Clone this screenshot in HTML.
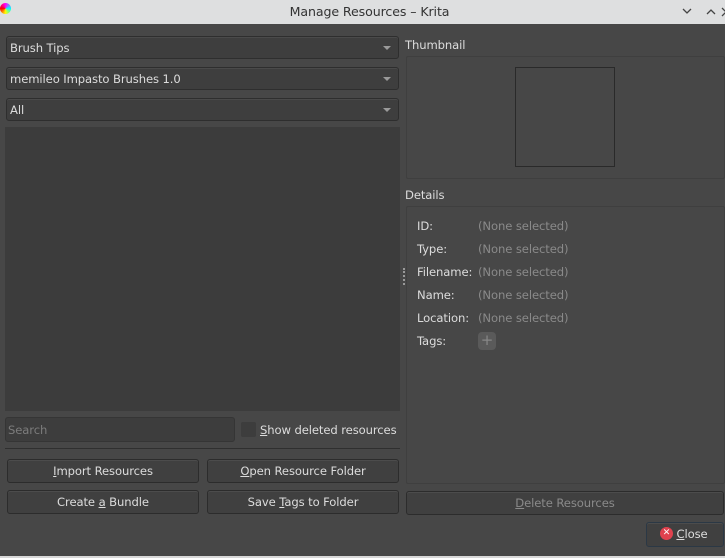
<!DOCTYPE html>
<html><head><style>
*{box-sizing:border-box;margin:0;padding:0}
body{width:725px;height:558px;background:#474747;font-family:"DejaVu Sans","Liberation Sans",sans-serif;font-size:11.6px;letter-spacing:-0.1px;color:#dcdcdc;position:relative;overflow:hidden}
.a{position:absolute}
.title{left:0;top:0;width:725px;height:24px;background:#dedfe0;color:#333;font-size:12.6px;text-align:center;line-height:24px;padding-left:14px}
.combo{background:#3e3e3e;border:1px solid #2e2e2e;border-radius:3px;height:23px;line-height:22px;padding-left:3px;box-shadow:inset 0 1px 0 #4a4a4a}
.combo:after{content:"";position:absolute;right:7px;top:9px;border-left:4px solid transparent;border-right:4px solid transparent;border-top:4px solid #9a9a9a}
.btn{background:#404040;border:1px solid #2c2c2c;border-radius:3px;height:24px;line-height:22px;text-align:center;box-shadow:inset 0 1px 0 #4c4c4c}
.box{border:1px solid #3f3f3f;border-radius:2px}
.lbl{left:417px;color:#dcdcdc}
.val{left:478px;color:#8a8a8a}
u{text-decoration:underline}
</style></head><body>
<div class="a title">Manage Resources – Krita</div>
<div class="a" style="left:0;top:3px;width:11px;height:11px;border-radius:50%;background:conic-gradient(#f0f,#0ff,#ff0,#f00,#f0f)"></div>
<svg class="a" style="left:680px;top:6px" width="45" height="12"><path d="M3 3l4 4 4-4M27 8l4-4 4 4M42 2l4 4-4 4" stroke="#444" stroke-width="1.3" fill="none"/></svg>

<div class="a combo" style="left:6px;top:36px;width:393px">Brush Tips</div>
<div class="a combo" style="left:6px;top:67px;width:393px">memileo Impasto Brushes 1.0</div>
<div class="a combo" style="left:6px;top:98px;width:393px">All</div>
<div class="a" style="left:5px;top:127px;width:395px;height:284px;background:#3c3c3c"></div>
<div class="a" style="left:5px;top:417px;width:230px;height:25px;background:#3d3d3d;border:1px solid #353535;border-radius:3px;padding-left:2px;line-height:24px;color:#7c7c7c">Search</div>
<div class="a" style="left:241px;top:422px;width:15px;height:15px;background:#3d3d3d;border-radius:2px"></div>
<div class="a" style="left:260px;top:423px"><u>S</u>how deleted resources</div>
<div class="a" style="left:5px;top:448px;width:395px;height:1px;background:#2f2f2f"></div>
<div class="a btn" style="left:7px;top:459px;width:192px"><u>I</u>mport Resources</div>
<div class="a btn" style="left:207px;top:459px;width:192px"><u>O</u>pen Resource Folder</div>
<div class="a btn" style="left:7px;top:490px;width:192px">Create <u>a</u> Bundle</div>
<div class="a btn" style="left:207px;top:490px;width:192px">Save <u>T</u>ags to Folder</div>

<div class="a" style="left:405px;top:38px">Thumbnail</div>
<div class="a box" style="left:406px;top:56px;width:319px;height:123px"></div>
<div class="a" style="left:515px;top:67px;width:100px;height:100px;border:1px solid #2a2a2a"></div>
<div class="a" style="left:405px;top:188px">Details</div>
<div class="a box" style="left:406px;top:206px;width:319px;height:278px"></div>
<div class="a" style="left:403px;top:268px;width:2px;height:17px;border-left:2px dotted #999"></div>
<div class="a lbl" style="top:219px">ID:</div><div class="a val" style="top:219px">(None selected)</div>
<div class="a lbl" style="top:242px">Type:</div><div class="a val" style="top:242px">(None selected)</div>
<div class="a lbl" style="top:265px">Filename:</div><div class="a val" style="top:265px">(None selected)</div>
<div class="a lbl" style="top:288px">Name:</div><div class="a val" style="top:288px">(None selected)</div>
<div class="a lbl" style="top:311px">Location:</div><div class="a val" style="top:311px">(None selected)</div>
<div class="a lbl" style="top:334px">Tags:</div>
<div class="a" style="left:478px;top:332px;width:18px;height:18px;border-radius:4px;background:#5a5a5a;color:#888;text-align:center;line-height:17px;font-size:15px">+</div>
<div class="a btn" style="left:406px;top:491px;width:318px;color:#8a8a8a"><u>D</u>elete Resources</div>
<div class="a btn" style="left:646px;top:522px;width:78px;height:25px;border-color:#2b3845;line-height:23px;padding-left:14px"><u>C</u>lose</div>
<div class="a" style="left:660px;top:527px;width:13px;height:13px;border-radius:50%;background:#e0424e;color:#fff;font-size:9px;line-height:13px;text-align:center">✕</div>
<div class="a" style="left:0;top:556px;width:725px;height:2px;background:#d8d8d8"></div>
</body></html>
